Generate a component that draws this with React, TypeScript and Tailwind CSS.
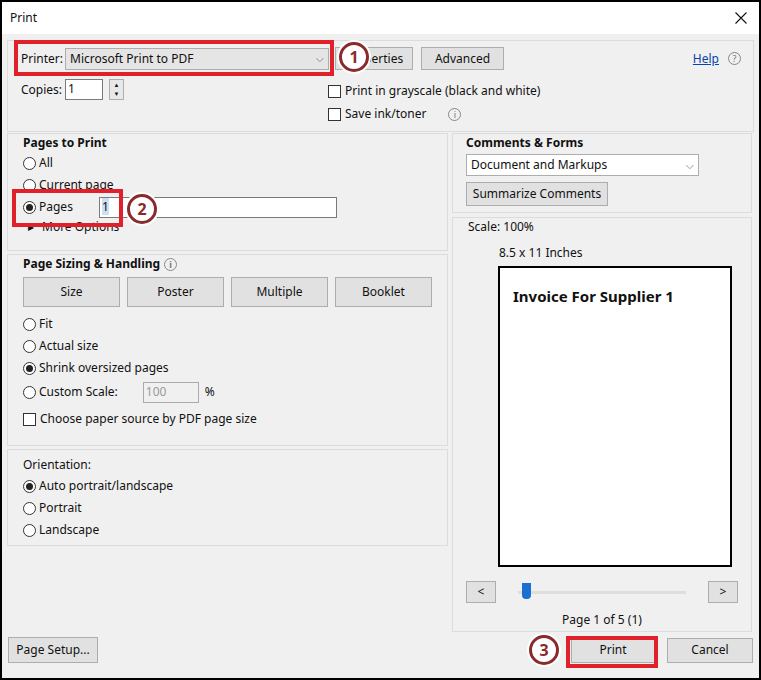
import React from "react";

const Radio = ({ on, label }: { on?: boolean; label: string }) => (
  <div className="flex items-center gap-[3px] h-[22px]">
    <span className="w-[13px] h-[13px] rounded-full border border-[#333] bg-white flex items-center justify-center">
      {on && <span className="w-[7px] h-[7px] rounded-full bg-[#222]" />}
    </span>
    <span>{label}</span>
  </div>
);
const Check = ({ label }: { label: string }) => (
  <div className="flex items-center gap-[4px]">
    <span className="w-[13px] h-[13px] border border-[#333] bg-white" />
    <span>{label}</span>
  </div>
);
const Btn = ({ children, cls }: { children: React.ReactNode; cls: string }) => (
  <div className={"bg-[#e1e1e1] border border-[#adadad] flex items-center justify-center " + cls}>{children}</div>
);
const Info = () => (
  <span className="inline-flex w-[13px] h-[13px] rounded-full border border-[#888] text-[9px] text-[#777] items-center justify-center leading-none">i</span>
);
const Num = ({ n }: { n: string }) => (
  <div className="absolute w-[34px] h-[34px] rounded-full bg-white flex items-center justify-center">
    <div className="w-[30px] h-[30px] rounded-full border-[3px] border-[#8b2a2a] flex items-center justify-center text-[#8b2a2a] font-bold text-[16px]">{n}</div>
  </div>
);

export default function App() {
  return (
    <div className="w-[761px] h-[680px] relative border-2 border-black bg-[#f0f0f0] text-[12px] text-[#111] overflow-hidden" style={{ fontFamily: '"Noto Sans", "Open Sans", sans-serif' }}>
      <div className="h-[32px] bg-white flex items-center justify-between px-[8px]">
        <span>Print</span>
        <svg width="12" height="12" viewBox="0 0 12 12" className="mr-[4px]"><path d="M0.5 0.5L11.5 11.5M11.5 0.5L0.5 11.5" stroke="#111" strokeWidth="1.1" /></svg>
      </div>
      <div className="px-[5px] pt-[6px]">
        <div className="h-[92px] border border-[#dcdcdc] relative">
          <div className="flex items-center pl-[13px] pt-[6px] gap-[2px]">
            <span>Printer:</span>
            <div className="w-[264px] h-[22px] bg-[#e5e5e5] border border-[#adadad] flex items-center justify-between px-[4px]">
              <span>Microsoft Print to PDF</span><span className="text-[10px] text-[#666]">⌵</span>
            </div>
            <Btn cls="ml-[4px] w-[78px] h-[23px]">Properties</Btn>
            <Btn cls="ml-[6px] w-[83px] h-[23px]">Advanced</Btn>
            <span className="ml-auto mr-[13px] text-[#0645ad] underline">Help</span>
            <span className="w-[13px] h-[13px] rounded-full border border-[#888] text-[9px] text-[#777] flex items-center justify-center mr-[12px] -ml-[6px]">?</span>
          </div>
          <div className="flex pl-[13px] mt-[4px]">
            <div className="flex items-start gap-[3px] w-[307px]">
              <span className="mt-[7px]">Copies:</span>
              <div className="w-[38px] h-[21px] bg-white border border-[#7a7a7a] mt-[5px] pl-[2px]">1</div>
              <div className="ml-[3px] mt-[5px] w-[15px] h-[21px] border border-[#adadad] bg-[#e8e8e8] flex flex-col text-[6px] items-center justify-around leading-none"><span>▲</span><span>▼</span></div>
            </div>
            <div className="flex flex-col gap-[5px] mt-[8px]">
              <Check label="Print in grayscale (black and white)" />
              <div className="flex items-center"><Check label="Save ink/toner" /><span className="ml-[22px]"><Info /></span></div>
            </div>
          </div>
        </div>
        <div className="flex gap-[4px] mt-[1px]">
          <div className="w-[441px] flex flex-col gap-[3px]">
            <div className="h-[118px] border border-[#dcdcdc] pl-[15px] pt-0">
              <div className="font-bold">Pages to Print</div>
              <Radio label="All" />
              <Radio label="Current page" />
              <div className="flex items-center"><Radio on label="Pages" /><div className="ml-[26px] w-[238px] h-[21px] bg-white border border-[#7a7a7a] pl-[2px]"><span className="bg-[#cce0f5]">1</span></div></div>
              <div className="flex items-center gap-[8px] pl-[5px]"><span className="text-[8px]">▶</span>More Options</div>
            </div>
            <div className="h-[192px] border border-[#dcdcdc] pl-[15px] pt-0">
              <div className="flex items-center gap-[4px] font-bold">Page Sizing &amp; Handling <Info /></div>
              <div className="flex gap-[7px] mt-[4px]">
                {["Size", "Poster", "Multiple", "Booklet"].map((t) => <Btn key={t} cls="w-[97px] h-[30px]">{t}</Btn>)}
              </div>
              <div className="mt-[6px]" />
              <Radio label="Fit" />
              <Radio label="Actual size" />
              <Radio on label="Shrink oversized pages" />
              <div className="flex items-center h-[26px]"><Radio label="Custom Scale:" /><div className="ml-[25px] w-[56px] h-[21px] border border-[#aaa] bg-[#f0f0f0] text-[#999] pl-[2px]">100</div><span className="ml-[6px]">%</span></div>
              <div className="mt-[5px]"><Check label="Choose paper source by PDF page size" /></div>
            </div>
            <div className="h-[97px] border border-[#dcdcdc] pl-[15px] pt-[6px]">
              <div className="mb-[1px]">Orientation:</div>
              <Radio on label="Auto portrait/landscape" />
              <Radio label="Portrait" />
              <Radio label="Landscape" />
            </div>
          </div>
          <div className="w-[300px] flex flex-col gap-[4px]">
            <div className="h-[80px] border border-[#dcdcdc] pl-[13px] pt-0">
              <div className="font-bold">Comments &amp; Forms</div>
              <div className="w-[233px] h-[22px] bg-white border border-[#adadad] flex items-center justify-between px-[4px] mt-[2px]"><span>Document and Markups</span><span className="text-[10px] text-[#666]">⌵</span></div>
              <Btn cls="w-[142px] h-[24px] mt-[6px]">Summarize Comments</Btn>
            </div>
            <div className="h-[415px] border border-[#dcdcdc] pt-0 flex flex-col">
              <div className="pl-[15px]">Scale: 100%</div>
              <div className="pl-[46px] mt-[8px]">8.5 x 11 Inches</div>
              <div className="ml-[45px] mt-[4px] w-[234px] h-[301px] border-2 border-black bg-white pl-[13px] pt-[17px]">
                <div className="font-bold text-[15px]">Invoice For Supplier 1</div>
              </div>
              <div className="flex items-center mt-[14px] px-[13px]">
                <Btn cls="w-[30px] h-[22px]">&lt;</Btn>
                <div className="relative flex-1 mx-[22px] h-[22px] flex items-center">
                  <div className="w-full h-[3px] bg-[#dedede]" />
                  <div className="absolute left-[4px] top-[2px] w-[9px] h-[16px] bg-[#1a6fd0] rounded-b-[4px]" />
                </div>
                <Btn cls="w-[30px] h-[22px]">&gt;</Btn>
              </div>
              <div className="text-center mt-[8px]">Page 1 of 5 (1)</div>
            </div>
          </div>
        </div>
        <div className="flex items-center mt-[5px]">
          <Btn cls="w-[90px] h-[26px] ml-[1px]">Page Setup...</Btn>
          <Btn cls="ml-auto w-[84px] h-[25px]">Print</Btn>
          <Btn cls="ml-[12px] w-[86px] h-[25px] mr-[1px]">Cancel</Btn>
        </div>
      </div>
      <div className="absolute left-[12px] top-[38px] w-[320px] h-[36px] border-[4px] border-[#e0202a]" />
      <div className="absolute left-[335px] top-[38px]"><Num n="1" /></div>
      <div className="absolute left-[10px] top-[187px] w-[111px] h-[38px] border-[4px] border-[#e0202a]" />
      <div className="absolute left-[123px] top-[190px]"><Num n="2" /></div>
      <div className="absolute left-[564px] top-[634px] w-[92px] h-[32px] border-[4px] border-[#e0202a]" />
      <div className="absolute left-[525px] top-[631px]"><Num n="3" /></div>
    </div>
  );
}
